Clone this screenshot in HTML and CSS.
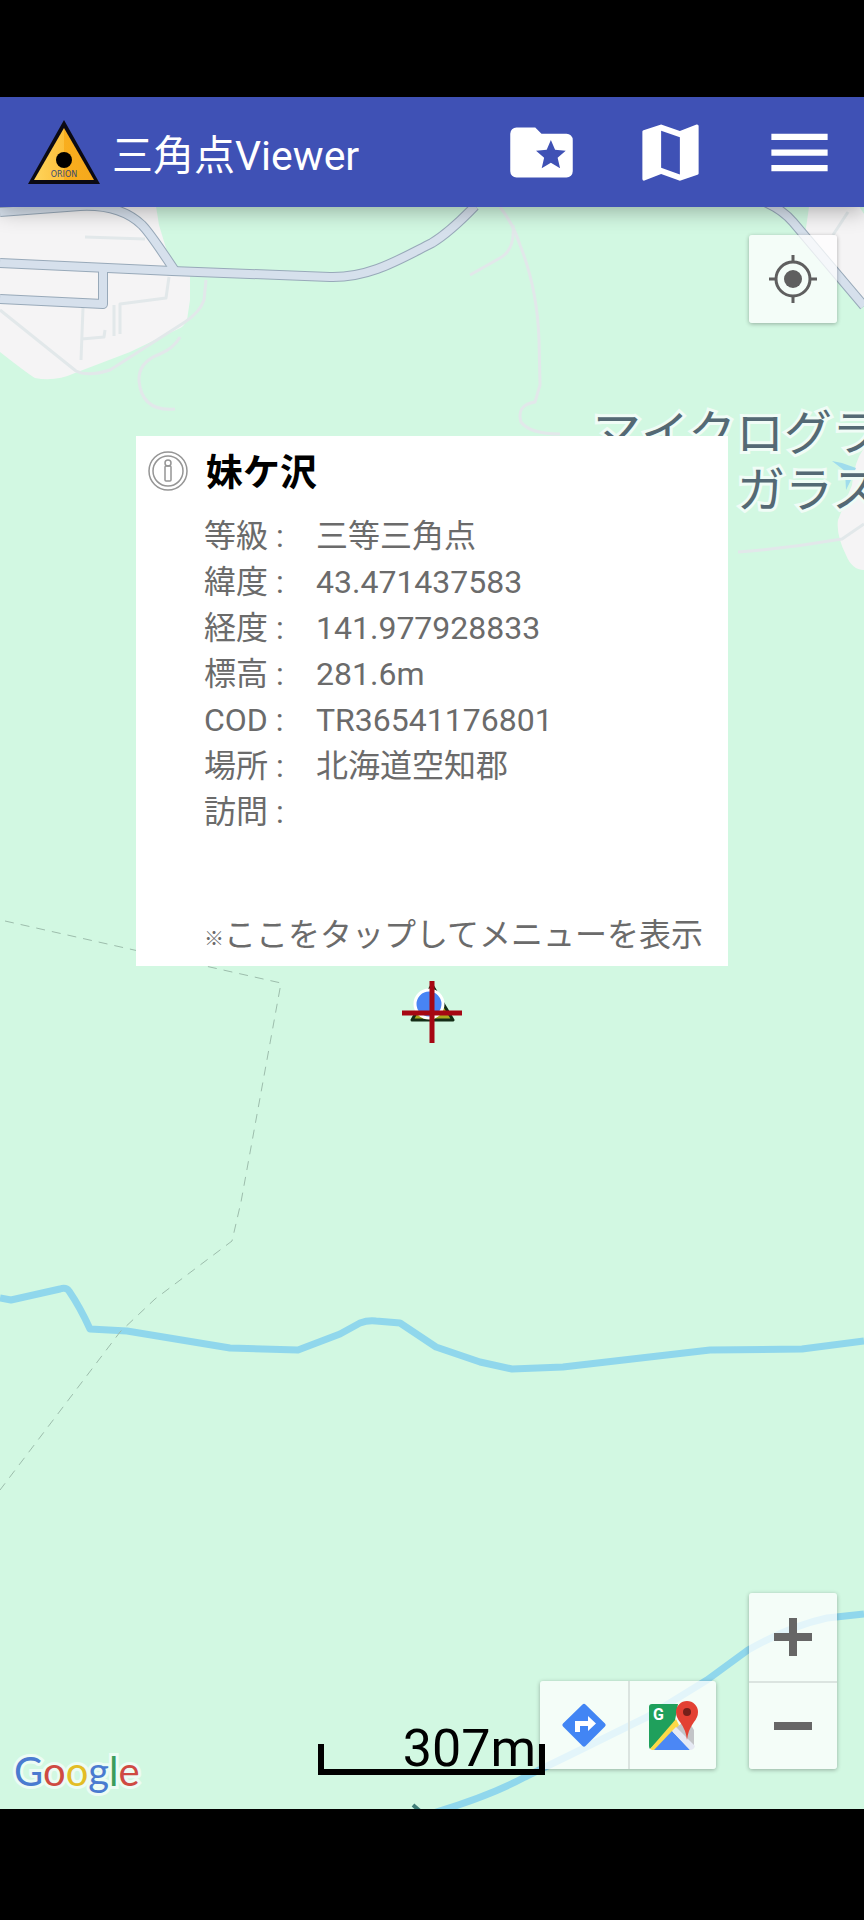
FILE: index.html
```html
<!DOCTYPE html>
<html lang="ja">
<head>
    <meta charset="UTF-8">
    <meta name="viewport" content="width=device-width, initial-scale=1.0">
    <title>三角点Viewer</title>
    <link rel="stylesheet" href="styles.css">
</head>
<body>
    <header class="app-bar">
        <svg class="app-logo" viewBox="0 0 72 64">
            <defs>
                <linearGradient id="gold" x1="0" x2="1">
                    <stop offset="0" stop-color="#ffd45c"/>
                    <stop offset="0.5" stop-color="#fbbf3a"/>
                    <stop offset="0.5" stop-color="#f9ae1e"/>
                    <stop offset="1" stop-color="#f5a81c"/>
                </linearGradient>
            </defs>
            <path d="M36 0L72 64H0z" fill="#0b0a14"/>
            <path d="M36 8L66 60H6z" fill="url(#gold)"/>
            <circle cx="36" cy="40" r="8" fill="#000"/>
            <text class="logo-text" x="36" y="57" text-anchor="middle">ORION</text>
        </svg>
        <h1 class="app-title">三角点Viewer</h1>
        <nav class="app-actions">
            <button class="icon-button" aria-label="お気に入り">
                <svg viewBox="0 0 24 24"><path d="M20 6H12L10 4H4A2 2 0 0 0 2 6V18A2 2 0 0 0 4 20H20A2 2 0 0 0 22 18V8A2 2 0 0 0 20 6M17.94 17L15 15.28L12.06 17L12.84 13.67L10.25 11.43L13.66 11.14L15 8L16.34 11.14L19.75 11.43L17.16 13.67L17.94 17Z"/></svg>
            </button>
            <button class="icon-button" aria-label="地図">
                <svg viewBox="0 0 24 24"><path d="M20.5 3L20.34 3.03L15 5.1L9 3L3.36 4.9C3.15 4.97 3 5.15 3 5.38V20.5A.5 .5 0 0 0 3.5 21L3.66 20.97L9 18.9L15 21L20.64 19.1C20.85 19.03 21 18.85 21 18.62V3.5A.5 .5 0 0 0 20.5 3M15 19L9 16.89V5L15 7.11V19Z"/></svg>
            </button>
            <button class="icon-button" aria-label="メニュー">
                <svg viewBox="0 0 24 24"><path d="M3 6h18v2H3zM3 11h18v2H3zM3 16h18v2H3z"/></svg>
            </button>
        </nav>
    </header>

    <main class="map">
        <svg class="map-canvas" viewBox="0 207 864 1602" preserveAspectRatio="xMidYMid slice">
            <!-- built-up areas -->
            <g fill="#f5f4f5">
                <path d="M0 200H155L159 225L172 268L190 276L190 300L187 320Q184 327 178 329L130 352L75 373Q55 382 35 378Q28 374 0 352z"/>
                <path d="M810 200L805 235L836 267L864 300V200z"/>
                <path d="M864 448Q854 462 852 485L838 520Q836 535 846 555Q852 570 864 570z"/>
            </g>
            <path d="M855 200L864 214V200z" fill="#d2f8e2"/>
            <path d="M832 461L842 463L856 468L851 480L846 490L845 471z" fill="#9fdcec"/>

            <!-- tracks -->
            <g class="track">
                <path d="M0 310L76 371Q88 377 110 370L185 322Q200 312 204 300L206 280"/>
                <path d="M83 308L81 360M82 339L104 337L105 330M114 336V305M120 334V304L166 298L169 277"/>
                <path d="M85 237L145 239"/>
                <path d="M180 337Q174 348 160 354Q138 362 139 381Q142 412 175 409"/>
                <path d="M500 207Q514 225 520 245C532 275 538 310 539 340L540 385L535 402Q516 405 521 422Q530 434 560 434"/>
                <path d="M513 225Q515 250 500 258L470 275"/>
                <path d="M738 552Q790 548 842 539L864 524"/>
                <path d="M848 212L833 235"/>
            </g>

            <!-- roads: casing, then fill -->
            <g class="road-casing">
                <path d="M0 212L80 206Q120 204 142 225Q150 233 175 271"/>
                <path d="M0 263L172 271L330 277C370 278 400 259 432 243Q450 232 475 206"/>
                <path d="M0 299L103 304V270"/>
                <path d="M760 200Q781 208 793 222L864 306"/>
            </g>
            <g class="road">
                <path d="M0 212L80 206Q120 204 142 225Q150 233 175 271"/>
                <path d="M0 263L172 271L330 277C370 278 400 259 432 243Q450 232 475 206"/>
                <path d="M0 299L103 304V270"/>
                <path d="M760 200Q781 208 793 222L864 306"/>
            </g>

            <!-- rivers -->
            <path class="river" d="M0 1298L11 1300L60 1289Q66 1287 69 1291Q80 1307 90 1329L127 1331L230 1348L298 1350L340 1334L360 1323Q368 1320 376 1321L400 1323L436 1347L480 1362L512 1369L563 1367L710 1350L802 1349L864 1341"/>
            <path class="river" d="M430 1814Q490 1796 525 1777L570 1755L647 1717L707 1680L748 1650Q790 1626 827 1618L864 1614"/>
            <path d="M413 1805L421 1812" stroke="#3f7d78" stroke-width="4"/>

            <!-- municipal border -->
            <path class="border-line" d="M5 921L281 983L241 1202L232 1241L155 1299L120 1332L0 1490"/>

            <!-- station marker, current position, cross hair -->
            <path d="M432 985L453 1020H412z" fill="#a8a81c" stroke="#142d16" stroke-width="3"/>
            <circle cx="429" cy="1004" r="14" fill="#4884f4" stroke="#fff" stroke-width="3"/>
            <path d="M402 1013H462M432 981V1043" stroke="#a60713" stroke-width="5"/>
        </svg>

        <p class="place-label">マイクログラ<br>ガラス</p>

        <section class="info-card">
            <svg class="info-icon" viewBox="0 0 40 40">
                <circle cx="20" cy="20" r="19"/>
                <circle cx="20" cy="20" r="15"/>
                <rect x="17" y="15" width="6" height="15" rx="1"/>
                <circle cx="20" cy="12" r="3"/>
            </svg>
            <div class="info-body">
                <h2 class="info-title">妹ケ沢</h2>
                <dl class="info-list">
                    <dt>等級 :</dt><dd>三等三角点</dd>
                    <dt>緯度 :</dt><dd>43.471437583</dd>
                    <dt>経度 :</dt><dd>141.977928833</dd>
                    <dt>標高 :</dt><dd>281.6m</dd>
                    <dt>COD :</dt><dd>TR36541176801</dd>
                    <dt>場所 :</dt><dd>北海道空知郡</dd>
                    <dt>訪問 :</dt><dd></dd>
                </dl>
                <p class="info-hint"><span class="info-mark">※</span>ここをタップしてメニューを表示</p>
            </div>
        </section>

        <div class="controls locate">
            <button class="map-button" aria-label="現在地">
                <svg viewBox="0 0 48 48" fill="none" stroke="#5f5f5f" stroke-width="3">
                    <circle cx="24" cy="24" r="17"/>
                    <circle cx="24" cy="24" r="9" fill="#5f5f5f" stroke="none"/>
                    <path d="M24 0V7M24 41V48M0 24H7M41 24H48"/>
                </svg>
            </button>
        </div>

        <div class="map-footer">
            <div class="controls toolbar">
                <button class="map-button" aria-label="経路">
                    <svg viewBox="0 0 48 48">
                        <path d="M22.500 3.500Q24 2 25.500 3.500L45 22.500Q46.500 24 45 25.500L25.500 45Q24 46.500 22.500 45L3 25.500Q1.500 24 3 22.500z" fill="#4285f4"/>
                        <path d="M15 31V20H28V15L36 22.500L28 30V25H20V31z" fill="#fff"/>
                    </svg>
                </button>
                <button class="map-button" aria-label="Google マップで開く">
                    <svg class="maps-icon" viewBox="0 0 50 50">
                        <path d="M4 4H30L26 26L2 49Q1 48 1 46V7Q1 4 4 4z" fill="#1fa05c"/>
                        <path d="M40 20L46 30V48L26 28z" fill="#c3c5c8"/>
                        <path d="M2 49L28 19L31 25L8 50H4z" fill="#fdd948"/>
                        <path d="M24 31L42 50H6z" fill="#4b87f5"/>
                        <path d="M24 31L28 27L47 46Q46 50 42 50z" fill="#e6eaf4"/>
                        <path d="M39 40Q38 30 32 22Q28 17 28 12A11 11 0 0 1 50 12Q50 17 46 22Q40 30 39 40z" fill="#e34133"/>
                        <circle cx="39" cy="12" r="4" fill="#74201a"/>
                        <text class="maps-g" x="5" y="20">G</text>
                    </svg>
                </button>
            </div>
            <div class="controls zoom">
                <button class="map-button" aria-label="拡大">
                    <svg class="zoom-icon" viewBox="0 0 38 38"><path d="M0 19H38M19 0V38" stroke="#666" stroke-width="8"/></svg>
                </button>
                <button class="map-button" aria-label="縮小">
                    <svg class="zoom-icon" viewBox="0 0 38 38"><path d="M0 19H38" stroke="#666" stroke-width="8"/></svg>
                </button>
            </div>
        </div>

        <div class="google"><span class="blue">G</span><span class="red">o</span><span class="yellow">o</span><span class="blue">g</span><span class="green">l</span><span class="red">e</span></div>
        <div class="scale-bar">307m</div>
    </main>
</body>
</html>
```

FILE: styles.css
```css
* {
    box-sizing: border-box;
}
body {
    display: flex;
    flex-direction: column;
    height: 100vh;
    margin: 0;
    padding: 97px 0 111px;
    background-color: #000;
    font-family: Roboto, "Noto Sans CJK JP", sans-serif;
}
h1, h2, p, dl, dd {
    margin: 0;
}
button {
    padding: 0;
    border: none;
    background: none;
    cursor: pointer;
}
svg {
    display: block;
}

/* App bar */
.app-bar {
    display: flex;
    align-items: center;
    flex: none;
    height: 110px;
    padding: 0 27px 0 28px;
    background-color: #3f51b5;
    box-shadow: 0 4px 20px rgba(0,0,0,0.3);
    position: relative;
    z-index: 1;
}
.app-logo {
    width: 72px;
    height: 64px;
}
.logo-text {
    font: 8px "DejaVu Sans", sans-serif;
    fill: #3c4c70;
}
.app-title {
    margin-left: 12px;
    padding-top: 8px;
    color: #fff;
    font-size: 41px;
    font-weight: 400;
    line-height: 48px;
}
.app-actions {
    display: flex;
    gap: 54px;
    margin-left: auto;
}
.icon-button svg {
    width: 75px;
    height: 75px;
    fill: #fff;
}

/* Map */
.map {
    position: relative;
    flex: 1;
    min-height: 0;
    overflow: hidden;
    background-color: #d2f8e2;
}
.map-canvas {
    width: 100%;
    height: 100%;
}
.map-canvas path {
    stroke-linejoin: round;
}
.track {
    fill: none;
    stroke: #e2e8ea;
    stroke-width: 3;
}
.road-casing {
    fill: none;
    stroke: #98a9b9;
    stroke-width: 10;
}
.road {
    fill: none;
    stroke: #d6e0ec;
    stroke-width: 8;
}
.river {
    fill: none;
    stroke: #90d7ec;
    stroke-width: 7;
}
.border-line {
    fill: none;
    stroke: #9dbdac;
    stroke-width: 1;
    stroke-dasharray: 9 7;
}
.place-label {
    position: absolute;
    top: 198px;
    right: -16px;
    color: #546974;
    font-size: 48px;
    font-weight: 400;
    line-height: 57px;
    text-align: right;
    white-space: nowrap;
    paint-order: stroke fill;
    -webkit-text-stroke: 6px #f0fcf6;
}

/* Info window */
.info-card {
    display: flex;
    gap: 16px;
    position: absolute;
    top: 229px;
    left: 50%;
    padding: 15px 12px 8px;
    width: 592px;
    transform: translateX(-50%);
    background-color: #fff;
    color: #6b6b6b;
    font-size: 32px;
    line-height: 46px;
}
.info-icon {
    flex: none;
    width: 40px;
    height: 40px;
    fill: none;
    stroke: #959595;
    stroke-width: 1.5;
}
.info-body {
    flex: 1;
}
.info-title {
    padding-left: 2px;
    color: #000;
    font-size: 37px;
    font-weight: 700;
    line-height: 46px;
}
.info-list {
    display: grid;
    grid-template-columns: 112px 1fr;
    grid-auto-rows: 46px;
    margin-top: 16px;
}
.info-hint {
    margin-top: 77px;
    white-space: nowrap;
}
.info-mark {
    font-size: 20px;
    font-weight: 700;
    line-height: 20px;
}

/* Map controls */
.controls {
    display: flex;
    border-radius: 3px;
    background-color: rgba(255,255,255,0.75);
    box-shadow: 0 1px 4px rgba(0,0,0,0.3);
}
.map-button {
    display: flex;
    align-items: center;
    justify-content: center;
    width: 88px;
    height: 88px;
}
.map-button svg {
    width: 48px;
    height: 48px;
}
.map-button .zoom-icon {
    width: 38px;
    height: 38px;
}
.locate {
    position: absolute;
    top: 28px;
    right: 27px;
}
.map-footer {
    display: flex;
    align-items: flex-end;
    gap: 33px;
    position: absolute;
    right: 27px;
    bottom: 40px;
}
.zoom {
    flex-direction: column;
}
.zoom .map-button + .map-button {
    border-top: 2px solid #dbe4e0;
}
.toolbar .map-button + .map-button {
    border-left: 2px solid #dbe4e0;
}
.map-button .maps-icon {
    width: 50px;
    height: 50px;
}
.maps-g {
    font: bold 16px Roboto, sans-serif;
    fill: #fff;
}

.google {
    position: absolute;
    left: 14px;
    bottom: 14px;
    font-family: Lato, sans-serif;
    font-size: 40px;
    line-height: 48px;
    paint-order: stroke fill;
    -webkit-text-stroke: 6px #ecfcf4;
}
.blue { color: #4a7bd0; }
.red { color: #cf4a42; }
.yellow { color: #e3bd25; }
.green { color: #3c9c5c; }

.scale-bar {
    position: absolute;
    left: 318px;
    bottom: 34px;
    width: 227px;
    height: 31px;
    padding-right: 3px;
    border: 6px solid #000;
    border-top: none;
    display: flex;
    align-items: flex-end;
    justify-content: flex-end;
    font-size: 52px;
    line-height: 40px;
}
```
